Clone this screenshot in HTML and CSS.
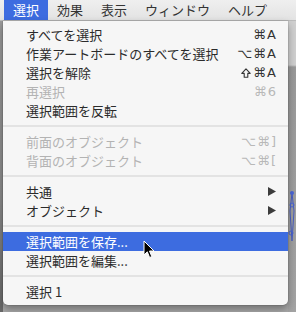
FILE: index.html
```html
<!DOCTYPE html>
<html lang="ja">
<head>
<meta charset="utf-8">
<link rel="stylesheet" href="styles.css">
</head>
<body>
<div class="screen">
  <div class="menubar">
    <span class="mb-item active">選択</span>
    <span class="mb-item">効果</span>
    <span class="mb-item">表示</span>
    <span class="mb-item">ウィンドウ</span>
    <span class="mb-item">ヘルプ</span>
  </div>
  <div class="desk">
    <div class="strip left-strip"></div>
    <div class="menu">
      <div class="row"><span>すべてを選択</span><span class="key">⌘A</span></div>
      <div class="row"><span>作業アートボードのすべてを選択</span><span class="key">⌥⌘A</span></div>
      <div class="row"><span>選択を解除</span><span class="key"><svg class="shift" width="10" height="10" viewBox="0 0 10 10"><path d="M5 0.8 L9.2 5.4 L6.8 5.4 L6.8 9.3 L3.2 9.3 L3.2 5.4 L0.8 5.4 Z" fill="none" stroke="#333" stroke-width="1.1" stroke-linejoin="round"/></svg>⌘A</span></div>
      <div class="row disabled"><span>再選択</span><span class="key">⌘6</span></div>
      <div class="row"><span>選択範囲を反転</span></div>
      <div class="sep"></div>
      <div class="row disabled"><span>前面のオブジェクト</span><span class="key">⌥⌘]</span></div>
      <div class="row disabled"><span>背面のオブジェクト</span><span class="key">⌥⌘[</span></div>
      <div class="sep"></div>
      <div class="row"><span>共通</span><svg class="arrow" width="8" height="9" viewBox="0 0 8 9"><path d="M0 0 L8 4.5 L0 9 Z" fill="#3c3c3c"/></svg></div>
      <div class="row"><span>オブジェクト</span><svg class="arrow" width="8" height="9" viewBox="0 0 8 9"><path d="M0 0 L8 4.5 L0 9 Z" fill="#3c3c3c"/></svg></div>
      <div class="sep"></div>
      <div class="row selected"><span>選択範囲を保存...</span></div>
      <div class="row"><span>選択範囲を編集...</span></div>
      <div class="sep"></div>
      <div class="row"><span>選択 1</span></div>
    </div>
    <div class="strip right-strip">
      <svg class="art" width="8" height="60" viewBox="0 0 8 60"><path d="M4 2 L2 20 L4 50 L6 20 Z" fill="none" stroke="#4a5fc4" stroke-width="1"/><circle cx="4" cy="2" r="2" fill="#4a66d8"/><circle cx="4" cy="14" r="2" fill="none" stroke="#4a66d8"/><circle cx="3" cy="42" r="2" fill="none" stroke="#4a66d8"/></svg>
    </div>
  </div>
  <svg class="cursor" width="13" height="19" viewBox="0 0 13 19"><path d="M1 1 L1 15 L4.3 11.8 L6.6 17.5 L8.8 16.6 L6.5 11 L11 11 Z" fill="#000" stroke="#fff" stroke-width="1"/></svg>
</div>
</body>
</html>
```
FILE: styles.css
```css
html, body {
  margin: 0;
  padding: 0;
}
body {
  width: 296px;
  height: 312px;
  overflow: hidden;
  background: #a9a9a9;
  font-family: "Noto Sans CJK JP", "Noto Sans", sans-serif;
  color: #2b2b2b;
}
.screen {
  position: relative;
  width: 296px;
  height: 312px;
  display: flex;
  flex-direction: column;
}
.menubar {
  height: 20px;
  display: flex;
  padding-left: 4px;
  background: linear-gradient(#efefef, #e3e3e3);
  border-bottom: 1px solid #bcbcbc;
  font-size: 13px;
  line-height: 20px;
}
.mb-item {
  padding: 0 9px;
  color: #333;
}
.mb-item.active {
  background: #3d6ce0;
  color: #fff;
}
.desk {
  display: flex;
  flex: 1;
  align-items: flex-start;
}
.strip {
  align-self: stretch;
}
.left-strip {
  width: 3px;
  background: linear-gradient(#9a9a9a 0, #8c8c8c 60%, #6a6a6a 100%);
}
.right-strip {
  flex: 1;
  background: linear-gradient(#d0d0d0 0, #d0d0d0 44px, #9a9a9a 46px, #a4a4a4 100%);
  padding-top: 170px;
}
.art {
  display: block;
}
.menu {
  width: 285px;
  background: #f6f6f6;
  padding: 4px 0;
  border-radius: 0 0 5px 5px;
  box-shadow: 0 4px 8px rgba(0,0,0,0.35), 0 0 0 0.5px rgba(0,0,0,0.15);
  font-size: 13px;
  position: relative;
  z-index: 1;
}
.row {
  height: 19px;
  line-height: 19px;
  display: flex;
  align-items: center;
  justify-content: space-between;
  padding: 0 12px 0 23px;
  color: #2b2b2b;
  white-space: nowrap;
}
.row.disabled {
  color: #b3b3b3;
}
.row.selected {
  background: #3d6ce0;
  color: #fff;
}
.key {
  display: flex;
  align-items: center;
  font-family: "DejaVu Sans", sans-serif;
  font-size: 13px;
  letter-spacing: 1px;
  margin-right: -1px;
  color: #333;
}
.shift {
  display: block;
  margin-right: 2px;
}
.row.disabled .key {
  color: #b8b8b8;
}
.sep {
  height: 2px;
  margin: 5px 0;
  background: #e3e3e3;
}
.arrow {
  display: block;
}
.cursor {
  position: absolute;
  left: 143px;
  top: 240px;
  z-index: 2;
}
```
